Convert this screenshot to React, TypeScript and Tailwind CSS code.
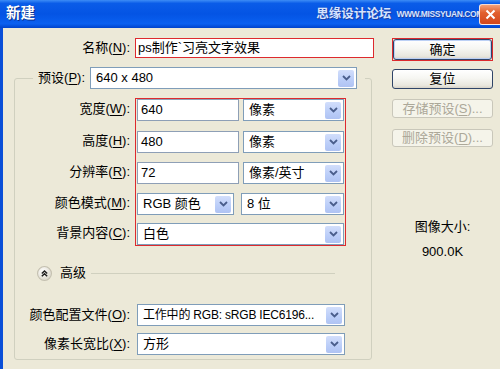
import type { ReactNode } from "react";

const font = { fontFamily: '"Liberation Sans", "Noto Sans CJK SC", sans-serif' };

function Key({ k }: { k: string }) {
  return <span className="underline underline-offset-2">{k}</span>;
}

function Label({ text, k, className = "" }: { text: string; k: string; className?: string }) {
  return (
    <span className={`whitespace-nowrap text-right ${className}`}>
      {text}(<Key k={k} />):
    </span>
  );
}

function Chevron() {
  return (
    <svg width="9" height="6" viewBox="0 0 9 6">
      <path d="M1 1 L4.5 4.5 L8 1" fill="none" stroke="#4A5E8C" strokeWidth="1.8" />
    </svg>
  );
}

function Select({ value, className = "", valueClass = "" }: { value: string; className?: string; valueClass?: string }) {
  return (
    <div className={`flex h-[22px] items-center border border-[#7F9DB9] bg-white pl-[5px] pr-[2px] ${className}`}>
      <span className={`flex-1 overflow-hidden whitespace-nowrap ${valueClass}`}>{value}</span>
      <span className="flex h-[17px] w-[16px] shrink-0 items-center justify-center rounded-[2px] bg-[linear-gradient(180deg,#D2DEFB_0%,#BACDF8_60%,#AFC3F3_100%)]">
        <Chevron />
      </span>
    </div>
  );
}

function Field({ value, className = "" }: { value: string; className?: string }) {
  return (
    <div className={`flex h-[22px] items-center border border-[#8E9FB6] bg-white px-[3px] ${className}`}>
      {value}
    </div>
  );
}

function Button({ children, className = "", disabled = false }: { children: ReactNode; className?: string; disabled?: boolean }) {
  return (
    <div
      className={`flex items-center justify-center rounded-[3px] border ${
        disabled
          ? "border-[#C9C7BA] bg-[#F5F4EA] text-[#ACA899]"
          : "border-[#2F4468] bg-[linear-gradient(180deg,#FFFFFF_0%,#F6F6F2_45%,#E9E7DE_85%,#D8D3C8_100%)] text-black"
      } ${className}`}
    >
      {children}
    </div>
  );
}

const rowGaps = ["mt-0", "mt-[10px]", "mt-[9px]", "mt-[9px]", "mt-[8px]"];

const labels: [string, string][] = [
  ["宽度", "W"],
  ["高度", "H"],
  ["分辨率", "R"],
  ["颜色模式", "M"],
  ["背景内容", "C"],
];

export default function App() {
  return (
    <div className="flex h-[369px] w-[500px] flex-col overflow-hidden bg-[#ECE9D8] text-[13px] text-black" style={font}>
      {/* Title bar */}
      <div className="flex h-[28px] shrink-0 items-center bg-[linear-gradient(180deg,#3D8DF6_0%,#0A5CE8_12%,#0454E4_50%,#0A60F0_85%,#0043CC_100%)] pl-[6px]">
        <span className="text-[14.5px] font-bold text-white [text-shadow:1px_1px_0_#0A2F8C]">新建</span>
        <div className="flex-1" />
        <span className="text-[12.5px] font-bold text-[#D6E4FF] [text-shadow:0_0_1px_#1B3FA8,1px_1px_0_#1B3FA8]">思缘设计论坛</span>
        <span className="ml-[5px] text-[8.5px] font-bold tracking-[-0.4px] text-[#D6E4FF] [text-shadow:0_0_1px_#1B3FA8,1px_1px_0_#1B3FA8]">
          WWW.MISSYUAN.COM
        </span>
        <div className="-ml-[4px] flex h-[21px] w-[21px] shrink-0 items-center justify-center rounded-l-[3px] border border-r-0 border-white/80 bg-[linear-gradient(180deg,#F2A07A_0%,#E2602E_40%,#D2471C_100%)]">
          <svg width="11" height="11" viewBox="0 0 11 11">
            <path d="M1.5 1.5 L9.5 9.5 M9.5 1.5 L1.5 9.5" stroke="white" strokeWidth="2" />
          </svg>
        </div>
      </div>

      {/* Body */}
      <div className="flex flex-1 border-l-[3px] border-[#0A4FD8]">
        {/* Left pane */}
        <div className="flex w-[389px] flex-col">
          <div className="mt-[10px] flex h-[20px] items-center">
            <Label text="名称" k="N" className="w-[127px]" />
            <div className="ml-[5px] flex h-[20px] w-[239px] items-center border border-[#DD2A2E] bg-white pl-[2px]">
              ps制作`习亮文字效果
            </div>
          </div>

          <fieldset className="ml-[11px] mt-[9px] w-[358px] rounded-[3px] border border-[#D0D0BF] pb-[4px]">
            <legend className="ml-[18px] pl-[3px] pr-[8px]">
              <div className="flex items-center">
                <Label text="预设" k="P" className="w-[49px] text-left" />
                <Select value="640 x 480" className="ml-[5px] w-[267px]" />
              </div>
            </legend>

            <div className="mt-[9px] flex">
              <div className="flex w-[115px] flex-col">
                {labels.map(([t, k], i) => (
                  <div key={k} className={`flex h-[22px] items-center justify-end ${rowGaps[i]}`}>
                    <Label text={t} k={k} />
                  </div>
                ))}
              </div>
              <div className="ml-[5px] flex flex-col border border-[#DD2A2E] px-[1px]">
                <div className="flex gap-[4px]">
                  <Field value="640" className="w-[102px]" />
                  <Select value="像素" className="w-[101px]" />
                </div>
                <div className="mt-[10px] flex gap-[4px]">
                  <Field value="480" className="w-[102px]" />
                  <Select value="像素" className="w-[101px]" />
                </div>
                <div className="mt-[9px] flex gap-[4px]">
                  <Field value="72" className="w-[102px]" />
                  <Select value="像素/英寸" className="w-[101px]" />
                </div>
                <div className="mt-[9px] flex gap-[7px]">
                  <Select value="RGB 颜色" className="w-[97px]" />
                  <Select value="8 位" className="w-[103px]" />
                </div>
                <div className="mt-[8px] flex">
                  <Select value="白色" className="w-[207px]" />
                </div>
              </div>
            </div>

            <div className="mr-[36px] mt-[20px] flex h-[14px] items-center pl-[22px]">
              <svg width="15" height="15" viewBox="0 0 14 14">
                <defs>
                  <radialGradient id="adv" cx="40%" cy="35%" r="70%">
                    <stop offset="0%" stopColor="#FFFFFF" />
                    <stop offset="100%" stopColor="#D9D5C7" />
                  </radialGradient>
                </defs>
                <circle cx="7" cy="7" r="6.5" fill="url(#adv)" stroke="#C4C0B0" />
                <path d="M4.5 7 L7 4.6 L9.5 7 M4.5 9.6 L7 7.2 L9.5 9.6" fill="none" stroke="#1E1E1E" strokeWidth="1.4" />
              </svg>
              <span className="ml-[8px]">高级</span>
              <div className="ml-[5px] h-px flex-1 bg-[#D0D0BF]" />
            </div>

            <div className="mt-[24px] flex items-center">
              <Label text="颜色配置文件" k="O" className="w-[115px]" />
              <Select
                value="工作中的 RGB: sRGB IEC6196..."
                valueClass="text-[12px] tracking-[-0.2px]"
                className="ml-[7px] w-[208px]"
              />
            </div>
            <div className="mt-[7px] flex items-center">
              <Label text="像素长宽比" k="X" className="w-[115px]" />
              <Select value="方形" className="ml-[7px] w-[208px]" />
            </div>
          </fieldset>
        </div>

        {/* Right pane */}
        <div className="flex w-[101px] flex-col">
          <div className="mt-[10px] border border-[#DD2A2E]">
            <Button className="h-[21px] shadow-[inset_0_0_0_1px_#BCD0F5]">确定</Button>
          </div>
          <Button className="mt-[8px] h-[20px]">复位</Button>
          <Button disabled className="mt-[10px] h-[19px]">
            存储预设(<Key k="S" />)...
          </Button>
          <Button disabled className="mt-[11px] h-[18px]">
            删除预设(<Key k="D" />)...
          </Button>
          <div className="mt-[72px] text-center leading-[16px]">图像大小:</div>
          <div className="mt-[9px] text-center leading-[16px]">900.0K</div>
        </div>
      </div>
    </div>
  );
}
